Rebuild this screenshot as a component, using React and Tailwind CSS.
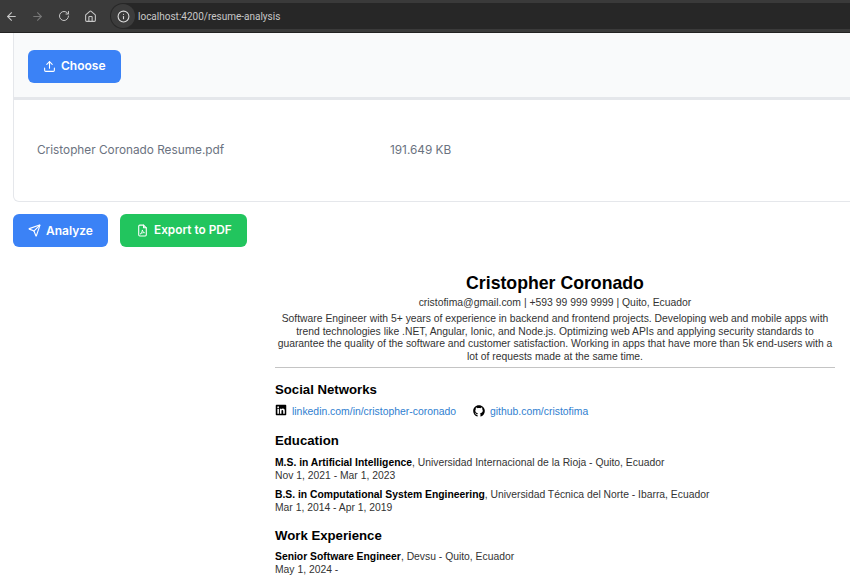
import { ArrowLeft, ArrowRight, RotateCw, Home, Info, Upload, Send } from 'lucide-react'
import { FaLinkedin, FaGithub } from 'react-icons/fa'

// Browser toolbar above the page
function BrowserBar() {
  return (
    <div className="flex items-center h-[33px] bg-[#3a3a3a] border-b border-[#222] text-[#c7c7c7] pl-[6px]">
      <ArrowLeft className="w-[13px] h-[13px] ml-[-1px] mr-[13px]" strokeWidth={2} />
      <ArrowRight className="w-[13px] h-[13px] mr-[14px] text-[#777]" strokeWidth={2} />
      <RotateCw className="w-[12px] h-[12px] mr-[14px]" strokeWidth={2} />
      <Home className="w-[13px] h-[13px] mr-[13px]" strokeWidth={2} />
      <div className="flex items-center flex-1 h-[26px] rounded-l-full bg-[#272727]">
        <span className="flex items-center justify-center w-[24px] h-[24px] ml-[1px] rounded-full bg-[#3c3c3c]">
          <Info className="w-[13px] h-[13px] text-[#ddd]" strokeWidth={2} />
        </span>
        <span className="ml-[3px] text-[10px] text-[#c8c8c8] font-['Roboto',sans-serif]">localhost:4200/resume-analysis</span>
      </div>
    </div>
  )
}

function PdfIcon() {
  return (
    <svg className="w-[13px] h-[13px]" viewBox="0 0 24 24" fill="none" stroke="currentColor" strokeWidth="2" strokeLinecap="round" strokeLinejoin="round">
      <path d="M14 2H7a2 2 0 0 0-2 2v16a2 2 0 0 0 2 2h10a2 2 0 0 0 2-2V7z" />
      <path d="M14 2v5h5" />
      <path d="M8.5 18c1.5-1 3-4 3.2-7 .6 3 2 4.6 4 5-2.5-.2-5 .6-7.2 2z" strokeWidth="1.6" />
    </svg>
  )
}

function UploadPanel() {
  return (
    <div className="w-[900px] border-x border-b border-[#e5e7eb] rounded-b-md bg-white">
      <div className="flex items-center h-[67px] pt-[2px] pl-[14px] bg-[#f9fafb] border-b-[3px] border-[#e5e7eb]">
        <button className="flex items-center gap-[5px] h-[33px] w-[93px] pl-[15px] rounded-md bg-[#3b82f6] text-white text-[12px] font-semibold">
          <Upload className="w-[13px] h-[13px]" strokeWidth={2} />
          Choose
        </button>
      </div>
      <div className="flex items-center h-[101px] pl-[23px] text-[11.8px] text-[#6b7280]">
        <span className="w-[353px]">Cristopher Coronado Resume.pdf</span>
        <span>191.649 KB</span>
      </div>
    </div>
  )
}

function Section({ title, titleGap, top = 'mt-[13px]', children }) {
  return (
    <section className={top}>
      <h2 className={`text-[13.2px] leading-[18px] font-bold text-black ${titleGap}`}>{title}</h2>
      {children}
    </section>
  )
}

function Entry({ bold, rest, dates }) {
  return (
    <div className="mb-[6px] text-[10.35px] leading-[13px] text-[#333]">
      <div><b className="text-black">{bold}</b>{rest}</div>
      <div>{dates}</div>
    </div>
  )
}

export default function App() {
  return (
    <div className="w-[850px] h-[575px] overflow-hidden bg-white font-['Inter',sans-serif]">
      <BrowserBar />
      <div className="pl-[13px]">
        <UploadPanel />
        <div className="flex gap-[12px] mt-[12px]">
          <button className="flex items-center gap-[5px] h-[33px] w-[95px] pl-[15px] rounded-md bg-[#3b82f6] text-white text-[12px] font-semibold">
            <Send className="w-[13px] h-[13px]" strokeWidth={2} />
            Analyze
          </button>
          <button className="flex items-center gap-[5px] h-[33px] w-[127px] pl-[16px] rounded-md bg-[#22c55e] text-white text-[11.8px] font-semibold">
            <PdfIcon />
            Export to PDF
          </button>
        </div>
      </div>
      <div className="ml-[275px] w-[560px] mt-[25px] font-['Liberation_Sans',sans-serif]">
        <div className="text-center border-b border-[#c4c4c4] pb-[4px]">
          <h1 className="text-[17.7px] leading-[22px] font-bold text-black">Cristopher Coronado</h1>
          <p className="mt-[2px] text-[10.4px] leading-[13px] text-[#333]">cristofima@gmail.com | +593 99 999 9999 | Quito, Ecuador</p>
          <p className="mt-[4px] text-[10.35px] leading-[12.5px] text-[#333]">
            Software Engineer with 5+ years of experience in backend and frontend projects. Developing web and mobile apps with trend technologies like .NET, Angular, Ionic, and Node.js. Optimizing web APIs and applying security standards to guarantee the quality of the software and customer satisfaction. Working in apps that have more than 5k end-users with a lot of requests made at the same time.
          </p>
        </div>
        <Section title="Social Networks" titleGap="mb-[5px]">
          <div className="flex items-center h-[15px] text-[10.4px] text-[#2f80d0] mb-[2px]">
            <FaLinkedin className="w-[12px] h-[12px] text-black mr-[5px] mt-[-3px]" />
            <span className="mr-[17px]">linkedin.com/in/cristopher-coronado</span>
            <FaGithub className="w-[12px] h-[12px] text-black mr-[5px] mt-[-1px]" />
            <span>github.com/cristofima</span>
          </div>
        </Section>
        <Section title="Education" titleGap="mb-[6px]">
          <Entry bold="M.S. in Artificial Intelligence" rest=", Universidad Internacional de la Rioja - Quito, Ecuador" dates="Nov 1, 2021 - Mar 1, 2023" />
          <Entry bold="B.S. in Computational System Engineering" rest=", Universidad Técnica del Norte - Ibarra, Ecuador" dates="Mar 1, 2014 - Apr 1, 2019" />
        </Section>
        <Section title="Work Experience" titleGap="mb-[5px]">
          <Entry bold="Senior Software Engineer" rest=", Devsu - Quito, Ecuador" dates="May 1, 2024 -" />
        </Section>
      </div>
    </div>
  )
}
